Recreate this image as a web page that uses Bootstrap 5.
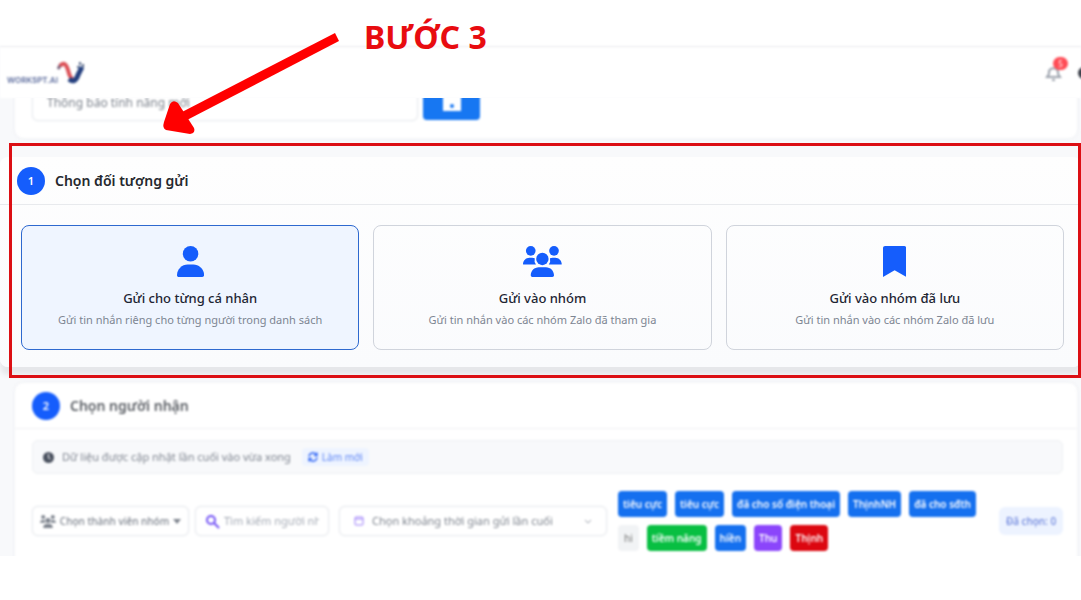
<!DOCTYPE html>
<html lang="vi">
<head>
<meta charset="utf-8">
<meta name="viewport" content="width=device-width, initial-scale=1">
<title>Bước 3 - Chọn đối tượng gửi</title>
<link href="https://cdn.jsdelivr.net/npm/bootstrap@5.3.0/dist/css/bootstrap.min.css" rel="stylesheet">
<style>
  :root { --brand: #155dfc; --tag: #1570ef; --ink: #1e2533; --soft: #7d8592; --line: #d0d4dc; }
  body { font-family: "Noto Sans", "Open Sans", sans-serif; font-size: 11px; background: #fff; color: var(--ink); overflow-x: hidden; }
  .guide-title { height: 46px; padding-left: 364px; font-size: 32px; line-height: 74px; font-weight: 700; color: #e80c10; position: relative; z-index: 3; white-space: nowrap; }
  .guide-arrow { position: absolute; left: 160px; top: 30px; z-index: 4; pointer-events: none; }
  .screen { background: #f8f9fb; }
  .out-focus { filter: blur(1px); }
  .next-step .out-focus { filter: blur(1.3px); }
  .topbar { height: 52px; background: #fff; border-top: 1px solid #ebebee; padding-left: 7px; }
  .brand-name { font-size: 8px; line-height: 10px; font-weight: 600; color: #5a6a9c; font-family: Inter, sans-serif; padding-top: 14px; }
  .brand-mark { margin: 0 0 3px -1px; }
  .bell { width: 22px; height: 22px; margin-right: 11px; }
  .bell-count { position: absolute; left: 8px; top: -5px; width: 15px; height: 13px; border-radius: 7px; background: #ff4b55; color: #fff; font-size: 8px; line-height: 13px; text-align: center; }
  .avatar-dot { width: 20px; height: 12px; border-radius: 6px; background: #3b3f49; margin-right: -17px; }
  .scrolled { height: 45px; overflow: hidden; padding: 0 4px 0 15px; }
  .panel { background: #fff; border-radius: 8px; box-shadow: 0 0 3px #e4e6eb; }
  .campaign { margin-top: -32px; padding: 17px; gap: 5px; }
  .campaign input { width: 386px; }
  .box-field { height: 30px; border: 1px solid #e9ebef; border-radius: 6px; background: #fff; color: #7e848e; box-shadow: 0 0 2px #eceef1; }
  .campaign .box-field { height: 38px; padding: 0 14px; font-size: 12px; }
  .save-btn { width: 57px; height: 37px; border: 0; border-radius: 4px; background: #1777f2; padding: 0; }
  .focus-step { height: 235px; padding-top: 14px; position: relative; }
  .focus-step::after { content: ""; position: absolute; inset: 0 0 0 9px; border: 3px solid #dc0f14; pointer-events: none; }
  .step-card { background: linear-gradient(180deg, #fefefe, #fafbfd); height: 210px; border-radius: 8px; box-shadow: 0 8px 5px #e6e7ea; }
  .step-head { height: 48px; padding: 0 17px; gap: 10px; border-bottom: 1px solid #e8eaed; }
  .step-head h2 { font-size: 14px; line-height: 24px; font-weight: 600; color: #25282e; }
  .step-num { width: 28px; height: 28px; border-radius: 50%; background: var(--brand); color: #fff; font-size: 11px; line-height: 28px; font-weight: 600; text-align: center; flex: none; }
  .options { display: grid; grid-template-columns: repeat(3, 1fr); gap: 14px; padding: 20px 17px 0 21px; }
  .option { height: 125px; border: 1px solid var(--line); border-radius: 8px; text-align: center; padding-top: 20px; cursor: pointer; display: block; }
  .option svg { display: block; margin: 0 auto 11px; height: 31px; fill: var(--brand); }
  .option strong { display: block; font-size: 13px; line-height: 20px; font-weight: 500; }
  .option span { display: block; font-size: 11px; line-height: 24px; color: var(--soft); }
  .btn-check:checked + .option { border-color: #2e69cf; background: #eff5ff; }
  .next-step { padding: 5px 4px 0 15px; height: 178px; overflow: hidden; }
  .next-step .panel { height: 190px; }
  .next-step .step-head { height: 46px; border-color: #f0f1f4; }
  .next-step h2 { color: #5b5f65; }
  .info-bar { height: 34px; margin: 11px 14px 0 17px; padding: 0 10px; background: #f8f9fb; border: 1px solid #eef0f3; border-radius: 6px; color: #7f8590; }
  .refresh { border: 0; border-radius: 4px; background: #eef4ff; color: #5f86f5; font-size: 10px; line-height: 18px; padding: 0 6px; margin-left: 11px; }
  .filters { margin: 17px 14px 0 17px; }
  .members { width: 157px; font-size: 10px; font-weight: 500; padding: 0 7px; margin-right: 6px; }
  .search { width: 134px; padding: 0 9px; margin-right: 10px; }
  .search input { border: 0; min-width: 0; width: 100%; padding: 0; background: none; outline: 0; color: #a5abb5; }
  .search input::placeholder { color: #a5abb5; }
  .period { width: 268px; padding: 0 14px; }
  .period select { appearance: none; border: 0; background: none; color: #7e848e; padding: 0; }
  .tags { margin-left: 11px; width: 360px; gap: 8px; }
  .tag { border: 0; height: 26px; border-radius: 4px; background: var(--tag); color: #fff; font-size: 10px; font-weight: 600; line-height: 26px; padding: 0 5px; white-space: nowrap; }
  .tag-plain { background: #f1f3f5; color: #777; font-weight: 400; padding: 0 6px; }
  .tag-green { background: #08bf42; } .tag-violet { background: #8b45fb; } .tag-red { background: #dc0710; }
  .picked { width: 64px; height: 28px; border-radius: 6px; background: #edf3ff; color: #6a83dc; font-size: 10px; line-height: 28px; font-weight: 500; text-align: center; }
</style>
</head>
<body>
<div class="position-relative">
  <h1 class="guide-title m-0">BƯỚC 3</h1>
  <svg class="guide-arrow" width="182" height="106" viewBox="0 0 182 106" aria-hidden="true"><path d="M175 3L179 11L27 90L22 82z" fill="#f00"/><path d="M4 92L10 74Q13 69 18 73L34 98Q36 103 30 104L6 100Q2 98 4 92z" fill="#f00"/></svg>

  <div class="screen">
    <header class="topbar out-focus d-flex align-items-center justify-content-between">
      <a href="#" class="d-flex align-items-center text-decoration-none">
        <span class="brand-name">WORKSPT.AI</span>
        <svg class="brand-mark" width="30" height="26" viewBox="0 0 30 26" fill="none" aria-hidden="true"><path d="M1 11L4 6" stroke="#77627c" stroke-width="3"/><path d="M3 8Q8 2 11 12Q13 21 17 22" stroke="#dc5157" stroke-width="4"/><path d="M12 21Q18 26 21 17L25 9" stroke="#25407f" stroke-width="5"/><path d="M23 4v3M26 6v3M20 9h2" stroke="#536486" stroke-width="2"/></svg>
      </a>
      <div class="d-flex align-items-center">
        <button class="bell btn border-0 p-0 position-relative" aria-label="Thông báo">
          <svg class="d-block" width="17" height="20" viewBox="0 0 17 20" fill="none" stroke="#9da3ad" stroke-width="2"><path d="M2 14h13l-2-3V8a5 5 0 0 0-9 0v3zM7 17h3"/></svg>
          <span class="bell-count">5</span>
        </button>
        <span class="avatar-dot"></span>
      </div>
    </header>

    <div class="scrolled">
      <div class="panel campaign out-focus d-flex">
        <input class="box-field" type="text" value="Thông báo tính năng mới" aria-label="Tên chiến dịch">
        <button class="save-btn" aria-label="Lưu"><svg width="18" height="18" viewBox="0 0 18 18"><path d="M0 0h18v18H0z" fill="#fff"/><circle cx="9" cy="13" r="2" fill="#1777f2"/></svg></button>
      </div>
    </div>

    <section class="focus-step">
      <div class="step-card">
        <div class="step-head d-flex align-items-center"><span class="step-num">1</span><h2 class="m-0">Chọn đối tượng gửi</h2></div>
        <div class="options">
          <div>
            <input class="btn-check" type="radio" name="target" id="t1" checked>
            <label class="option" for="t1"><svg viewBox="0 0 448 512"><circle cx="224" cy="128" r="128"/><path d="M0 482c0-98 80-178 178-178h92c98 0 178 80 178 178 0 17-13 30-30 30H30c-17 0-30-13-30-30z"/></svg><strong>Gửi cho từng cá nhân</strong><span>Gửi tin nhắn riêng cho từng người trong danh sách</span></label>
          </div>
          <div>
            <input class="btn-check" type="radio" name="target" id="t2">
            <label class="option" for="t2"><svg viewBox="0 0 640 512"><g id="people"><circle cx="128" cy="80" r="80"/><circle cx="512" cy="80" r="80"/><circle cx="320" cy="214" r="102"/><path d="M0 299c0-59 48-107 107-107h43c16 0 31 4 44 10a128 128 0 0 0 20 105H21c-12 0-21 3-21-8zM426 307a128 128 0 0 0 20-105c13-6 28-10 44-10h43c59 0 107 48 107 107 0 11-9 8-21 8zM128 485c0-74 60-133 133-133h118c73 0 133 59 133 133 0 15-12 27-27 27H155c-15 0-27-12-27-27z"/></g></svg><strong>Gửi vào nhóm</strong><span>Gửi tin nhắn vào các nhóm Zalo đã tham gia</span></label>
          </div>
          <div>
            <input class="btn-check" type="radio" name="target" id="t3">
            <label class="option" for="t3"><svg viewBox="0 0 384 512"><path d="M0 34C0 15 15 0 34 0h316c19 0 34 15 34 34v478L192 400 0 512z"/></svg><strong>Gửi vào nhóm đã lưu</strong><span>Gửi tin nhắn vào các nhóm Zalo đã lưu</span></label>
          </div>
        </div>
      </div>
    </section>

    <section class="next-step">
      <div class="panel out-focus">
        <div class="step-head d-flex align-items-center"><span class="step-num">2</span><h2 class="m-0">Chọn người nhận</h2></div>
        <div class="info-bar d-flex align-items-center">
          <svg class="me-2" width="11" height="11" viewBox="0 0 22 22"><circle cx="11" cy="11" r="11" fill="#4b5260"/><path d="M11 4v8l4 2" fill="none" stroke="#fff" stroke-width="2"/></svg>
          <span>Dữ liệu được cập nhật lần cuối vào vừa xong</span>
          <button class="refresh d-flex align-items-center gap-1"><svg width="10" height="10" viewBox="0 0 20 20" fill="none" stroke="#3d6ff5" stroke-width="3"><path d="M2 9a8 8 0 0 1 15-3M18 11a8 8 0 0 1-15 3M18 1v6h-6M2 19v-6h6"/></svg>Làm mới</button>
        </div>
        <div class="filters d-flex align-items-center">
          <button class="box-field members d-flex align-items-center justify-content-between text-nowrap"><svg width="16" height="13" viewBox="0 0 640 512" fill="#7e848e"><use href="#people"/></svg>Chọn thành viên nhóm<svg width="8" height="5"><path d="M0 0h8L4 5z" fill="#7e848e"/></svg></button>
          <label class="box-field search d-flex align-items-center"><svg class="flex-shrink-0 me-1" width="15" height="15" viewBox="0 0 15 15" fill="none" stroke="#7353f5" stroke-width="2"><circle cx="6" cy="6" r="4"/><path d="M9 9l5 5"/></svg><input type="text" placeholder="Tìm kiếm người nhận" aria-label="Tìm kiếm người nhận"></label>
          <label class="box-field period d-flex align-items-center"><svg class="me-2" width="10" height="10" viewBox="0 0 10 10" fill="none" stroke="#9b7dfa"><rect x="1" y="1" width="8" height="8" rx="1"/><path d="M1 3h8"/></svg><select class="flex-grow-1" aria-label="Khoảng thời gian"><option>Chọn khoảng thời gian gửi lần cuối</option></select><svg width="8" height="5" fill="none" stroke="#9aa0aa"><path d="M1 1l3 3 3-3"/></svg></label>
          <div class="tags d-flex flex-wrap">
            <button class="tag">tiêu cực</button><button class="tag">tiêu cực</button><button class="tag">đã cho số điện thoại</button><button class="tag">ThịnhNH</button><button class="tag">đã cho sđth</button>
            <button class="tag tag-plain">hi</button><button class="tag tag-green">tiềm năng</button><button class="tag">hiền</button><button class="tag tag-violet">Thu</button><button class="tag tag-red">Thịnh</button>
          </div>
          <span class="picked ms-auto">Đã chọn: 0</span>
        </div>
      </div>
    </section>
  </div>
</div>
<script src="https://cdn.jsdelivr.net/npm/bootstrap@5.3.0/dist/js/bootstrap.bundle.min.js"></script>
</body>
</html>
